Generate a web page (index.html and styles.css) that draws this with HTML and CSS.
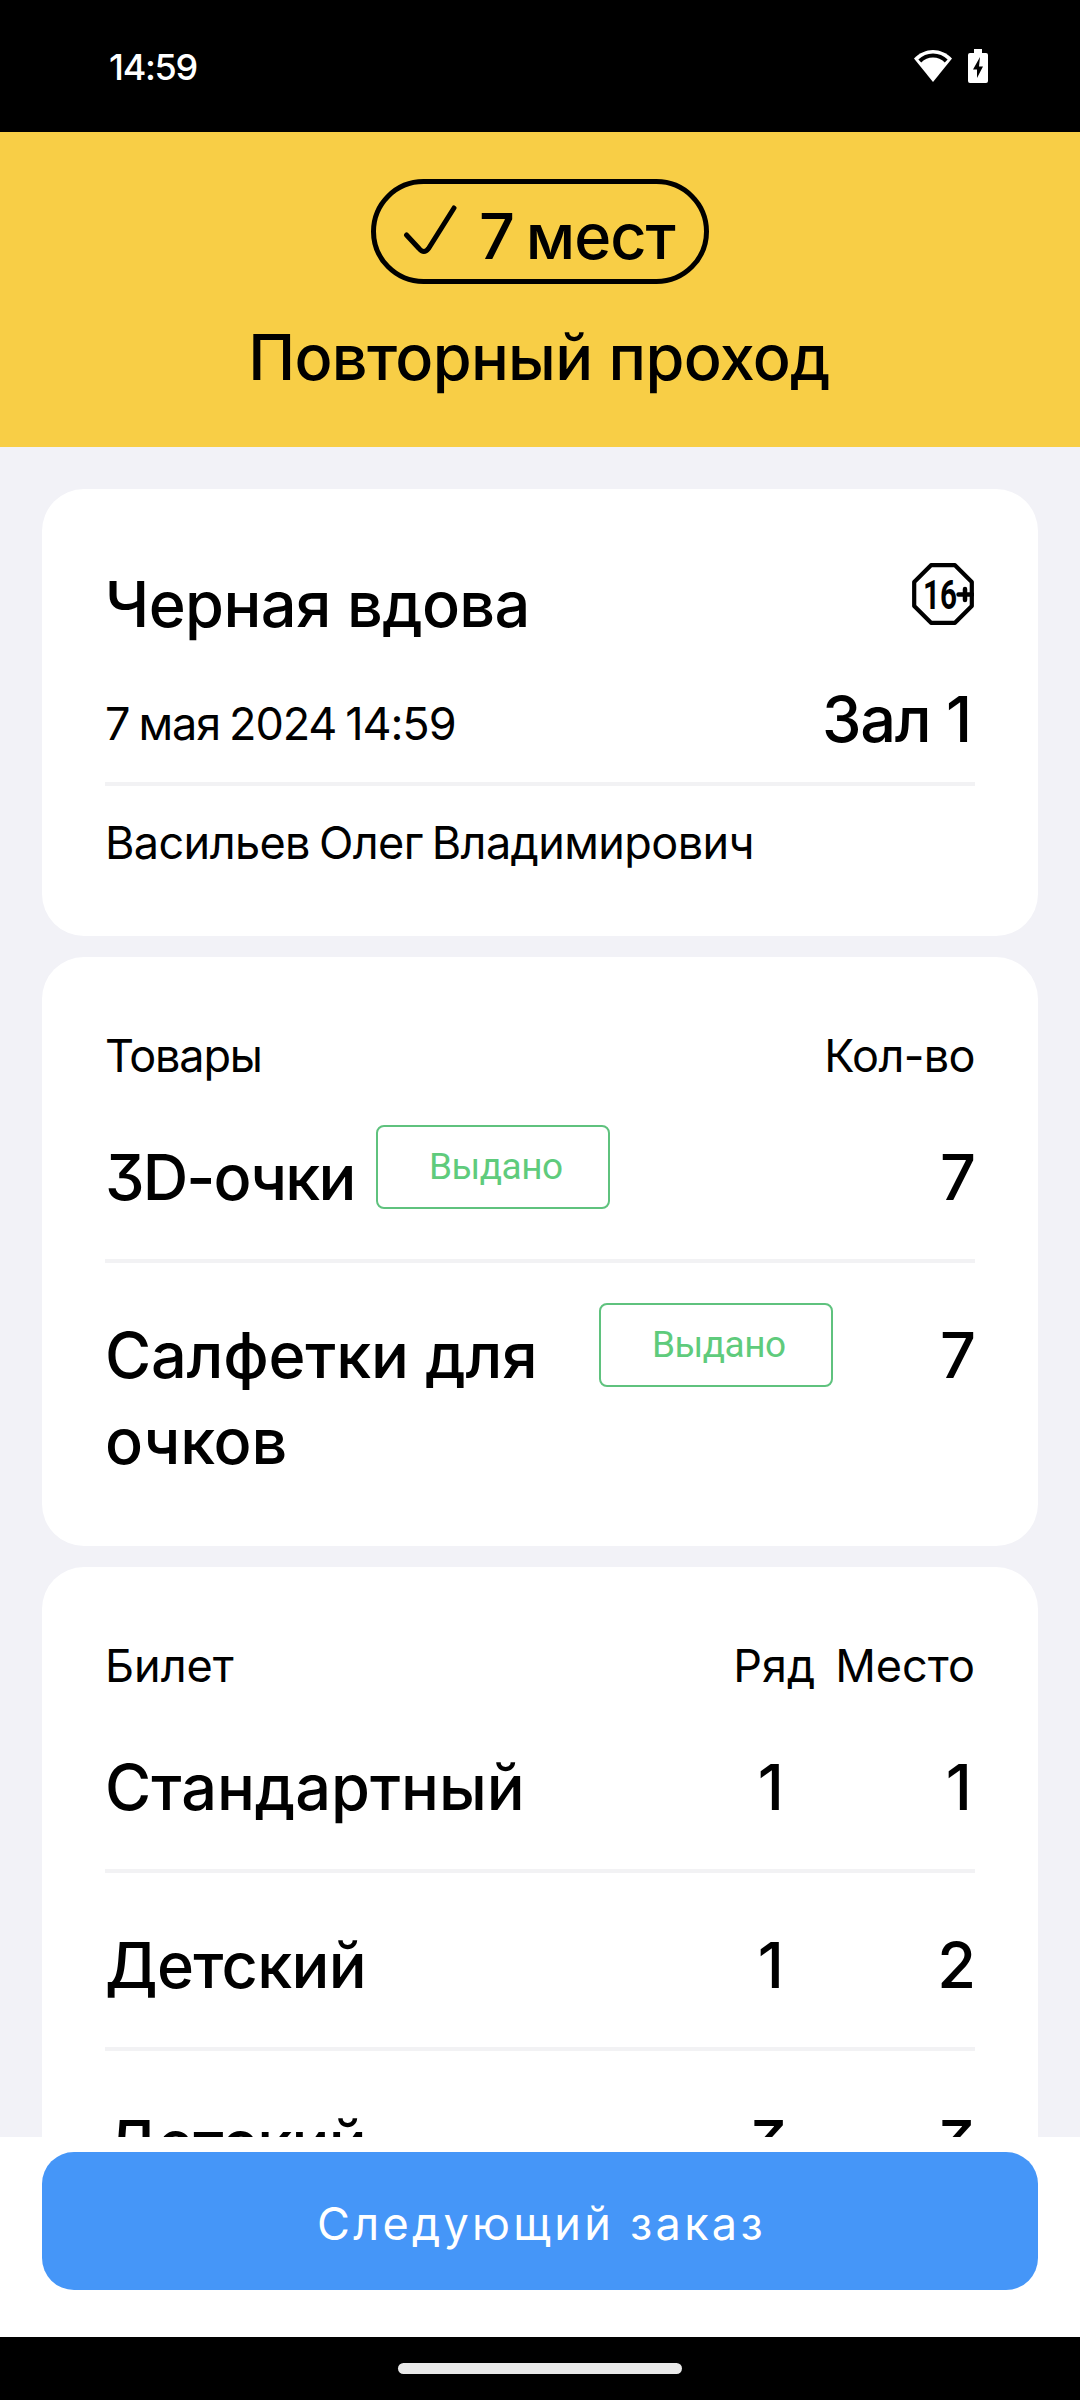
FILE: index.html
```
<!DOCTYPE html>
<html lang="ru">
<head>
  <meta charset="UTF-8">
  <meta name="viewport" content="width=device-width, initial-scale=1.0">
  <title>Повторный проход</title>
  <link rel="stylesheet" href="styles.css">
</head>
<body>
  <div class="status-bar">
    <span class="time">14:59</span>
    <div class="status-icons">
      <svg class="wifi" width="40" height="34" viewBox="0 0 40 34">
        <path d="M1 9.500C12 -2 28 -2 39 9.500L20 33z" fill="#fff"/>
        <path d="M6.800 12C14 4.600 26 4.600 33.200 12" fill="none" stroke="#000" stroke-width="4"/>
      </svg>
      <svg class="battery" width="20" height="34" viewBox="0 0 20 34">
        <path d="M6 0h8v4h4a2 2 0 0 1 2 2v26a2 2 0 0 1-2 2H2a2 2 0 0 1-2-2V6a2 2 0 0 1 2-2h4z" fill="#fff"/>
        <path d="M12 8L5 20.500h4V29l6-11.500h-4z" fill="#000"/>
      </svg>
    </div>
  </div>

  <header class="header">
    <div class="seats">
      <svg class="check" width="54" height="54" viewBox="0 0 54 54">
        <path d="M3.500 32L16 45.500Q21 51.500 25.500 45.500L51 5" fill="none" stroke="#000" stroke-width="5" stroke-linecap="round"/>
      </svg>
      <span class="big seats-text">7 мест</span>
    </div>
    <div class="big header-title">Повторный проход</div>
  </header>

  <main class="content">
    <section class="card film">
      <div class="film-top">
        <div class="big film-name">Черная вдова</div>
        <svg class="age" width="62" height="62" viewBox="0 0 62 62">
          <path d="M19 2.200h24L59.800 19v24L43 59.800H19L2.200 43V19z" fill="#fff" stroke="#000" stroke-width="4.200" stroke-linejoin="round"/>
          <text class="age-text" x="11" y="45.500" textLength="34" lengthAdjust="spacingAndGlyphs">16</text>
          <path d="M46.500 31.500H60M53 26v11" fill="none" stroke="#000" stroke-width="4.500" stroke-linecap="round"/>
        </svg>
      </div>
      <div class="film-info">
        <div class="small date">7 мая 2024 14:59</div>
        <div class="big hall">Зал 1</div>
      </div>
      <div class="small client">Васильев Олег Владимирович</div>
    </section>

    <section class="card goods">
      <div class="card-head">
        <span class="small goods-head">Товары</span>
        <span class="small count-head">Кол-во</span>
      </div>
      <div class="row">
        <div class="big name glasses">3D-очки</div>
        <div class="issued">Выдано</div>
        <div class="big num count">7</div>
      </div>
      <div class="row">
        <div class="big name wipes">Салфетки для очков</div>
        <div class="issued">Выдано</div>
        <div class="big num count">7</div>
      </div>
    </section>

    <section class="card tickets">
      <div class="card-head">
        <span class="small ticket-head">Билет</span>
        <span class="small line-head">Ряд</span>
        <span class="small place-head">Место</span>
      </div>
      <div class="row">
        <div class="big name standard">Стандартный</div>
        <div class="big num one">1</div>
        <div class="big num place one">1</div>
      </div>
      <div class="row">
        <div class="big name child">Детский</div>
        <div class="big num one">1</div>
        <div class="big num place">2</div>
      </div>
      <div class="row">
        <div class="big name child">Детский</div>
        <div class="big num">3</div>
        <div class="big num place">3</div>
      </div>
    </section>
  </main>

  <footer class="footer">
    <button class="next">Следующий заказ</button>
  </footer>
  <div class="nav-bar"><div class="handle"></div></div>
</body>
</html>
```
FILE: styles.css
```
* {
  box-sizing: border-box;
}
body {
  margin: 0;
  width: 1080px;
  height: 2400px;
  overflow: hidden;
  display: flex;
  flex-direction: column;
  background: #f2f2f7;
  color: #000;
  font-family: Inter, "Noto Sans", sans-serif;
  font-feature-settings: "cv09";
}
.big {
  font-size: 63px;
  line-height: 86px;
  font-weight: 500;
  white-space: nowrap;
}
.small {
  font-size: 45px;
  line-height: 61px;
  font-weight: 400;
  white-space: nowrap;
}

/* status bar */
.status-bar {
  flex: none;
  height: 132px;
  padding: 0 92px 0 109px;
  display: flex;
  justify-content: space-between;
  align-items: center;
  background: #000;
  color: #fff;
}
.time {
  padding-top: 2px;
  font-size: 36px;
  line-height: 44px;
  font-weight: 500;
  letter-spacing: -1.3px;
}
.status-icons {
  display: flex;
  gap: 15px;
}

/* header */
.header {
  flex: none;
  height: 315px;
  padding-top: 47px;
  display: flex;
  flex-direction: column;
  align-items: center;
  background: #f8ce46;
}
.seats {
  width: 338px;
  height: 105px;
  padding: 9px 0 0 27px;
  display: flex;
  border: 5px solid #000;
  border-radius: 53px;
}
.seats-text {
  letter-spacing: -1px;
  word-spacing: -4px;
}
.check {
  margin: 10px 22px 0 0;
}
.header-title {
  margin-top: 30px;
  padding-right: 2px;
  letter-spacing: -0.7px;
}

/* cards */
.content {
  flex: 1;
  min-height: 0;
  overflow: hidden;
  padding: 42px 42px 0;
}
.card {
  margin-bottom: 21px;
  padding: 68px 63px 62px;
  background: #fff;
  border-radius: 42px;
}
.film {
  padding-top: 72px;
  padding-bottom: 63px;
}
.film-top {
  display: flex;
  justify-content: space-between;
}
.film-name {
  letter-spacing: -0.6px;
}
.age {
  margin: 2px 1px 0 0;
}
.age-text {
  font-family: Roboto, sans-serif;
  font-size: 41px;
  font-weight: 700;
}
.film-info {
  margin-top: 29px;
  padding-bottom: 20px;
  display: flex;
  justify-content: space-between;
  border-bottom: 4px solid #f2f2f4;
}
.date {
  margin-top: 17px;
  letter-spacing: -1.1px;
  word-spacing: -2.5px;
}
.hall {
  padding-right: 4px;
  letter-spacing: -1.2px;
}
.client {
  margin-top: 26px;
  letter-spacing: -0.6px;
  word-spacing: -3px;
}
.card-head {
  margin-bottom: 39px;
  display: flex;
}
.goods-head, .ticket-head {
  flex: 1;
}
.goods-head {
  letter-spacing: -1.2px;
}
.count-head {
  letter-spacing: -0.6px;
}
.place-head {
  margin-left: 20px;
}
.row {
  padding-bottom: 39px;
  display: flex;
  align-items: flex-start;
}
.row + .row {
  padding-top: 40px;
  border-top: 4px solid #f2f2f4;
}
.row:last-child {
  padding-bottom: 0;
}
.name, .num {
  margin-top: 9px;
}
.num {
  letter-spacing: -2px;
}
.one {
  letter-spacing: 2px;
}
.wipes {
  width: 494px;
  letter-spacing: -0.2px;
  white-space: normal;
}
.glasses {
  width: 271px;
  letter-spacing: -1.9px;
}
.child {
  letter-spacing: -0.7px;
}
.issued {
  width: 234px;
  height: 84px;
  padding-left: 51px;
  border: 2px solid #5fc27e;
  border-radius: 8px;
  color: #5fcb7c;
  font: 400 37px/80px Roboto, sans-serif;
  letter-spacing: -0.5px;
}
.tickets .name {
  flex: 1;
}
.count {
  margin-left: auto;
  padding-right: 1px;
}
.place {
  width: 189px;
  padding-right: 1px;
  text-align: right;
}

/* bottom */
.footer {
  flex: none;
  height: 200px;
  padding: 15px 42px 0;
  background: #fff;
}
.next {
  width: 100%;
  height: 138px;
  padding: 5px 0 0 3px;
  border: 0;
  border-radius: 32px;
  background: #4596f8;
  color: #fff;
  font: 400 45px/61px Inter, "Noto Sans", sans-serif;
  letter-spacing: 3.3px;
}
.nav-bar {
  flex: none;
  height: 63px;
  padding-top: 26px;
  background: #000;
}
.handle {
  width: 284px;
  height: 11px;
  margin: 0 auto;
  border-radius: 6px;
  background: #e9e9e9;
}
```
